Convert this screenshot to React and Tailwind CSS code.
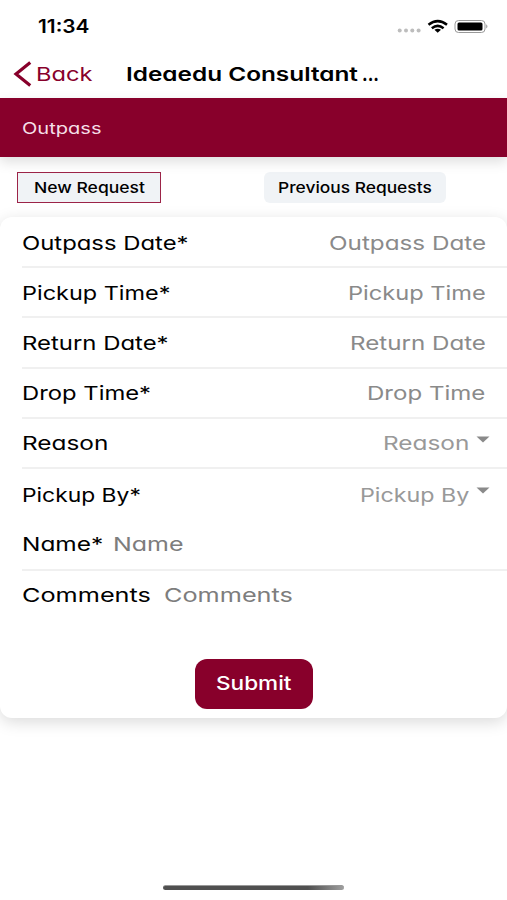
import React, { useLayoutEffect, useRef, useState } from 'react';

// Stretches a single line of text to the given width
const WideText = ({ width, className = '', children }) => {
    const ref = useRef(null);
    const [scale, setScale] = useState(1);

    useLayoutEffect(() => {
        setScale(width / ref.current.offsetWidth);
    }, [width, children]);

    return (
        <span className={`block shrink-0 whitespace-nowrap text-left ${className}`} style={{ width }}>
            <span ref={ref} className="inline-block origin-left" style={{ transform: `scaleX(${scale})` }}>
                {children}
            </span>
        </span>
    );
};

const rows = [
    { label: 'Outpass Date*', labelWidth: 167, value: 'Outpass Date', valueWidth: 157 },
    { label: 'Pickup Time*', labelWidth: 148, value: 'Pickup Time', valueWidth: 138 },
    { label: 'Return Date*', labelWidth: 146, value: 'Return Date', valueWidth: 136 },
    { label: 'Drop Time*', labelWidth: 129, value: 'Drop Time', valueWidth: 119 },
    { label: 'Reason', labelWidth: 86, value: 'Reason', valueWidth: 86, select: true },
    { label: 'Pickup By*', labelWidth: 119, value: 'Pickup By', valueWidth: 109, select: true },
];

const StatusBar = () => (
    <div className="flex h-[50px] shrink-0 items-center pt-[3px] pl-[38px]">
        <WideText width={51} className="pt-px text-[18px] font-semibold">11:34</WideText>
        <svg className="ml-[307px] h-[20px] w-[94px]" viewBox="396 17 94 20">
            <g fill="#bdbdbd">
                <circle cx="399.7" cy="30.5" r="2" />
                <circle cx="406" cy="30.5" r="2" />
                <circle cx="412.3" cy="30.5" r="2" />
                <circle cx="418.6" cy="30.5" r="2" />
            </g>
            <g fill="none" stroke="#000" strokeWidth="2.5">
                <path d="M428.5 24.8Q437.7 17.4 447 24.8" />
                <path d="M431.8 28.2Q437.7 23.5 443.6 28.2" />
            </g>
            <path d="M434.4 29.8Q437.7 27.6 441 29.8L437.7 32.8Z" fill="#000" />
            <rect x="455" y="20.5" width="30" height="12" rx="3.5" fill="none" stroke="#999" />
            <rect x="457.5" y="22.5" width="25" height="8" rx="1.5" fill="#000" />
            <path d="M486.3 24.3Q488.5 26.4 486.3 28.6Z" fill="#888" />
        </svg>
    </div>
);

const FieldRow = ({ label, labelWidth, value, valueWidth, select, last }) => (
    <div className={`ml-[22px] flex h-[50.2px] items-center justify-between pt-[3px] ${last ? '' : 'border-b-2 border-[#f0f0f0]'} ${select ? 'pr-[17px]' : 'pr-[21px]'}`}>
        <WideText width={labelWidth}>{label}</WideText>
        <div className={`flex items-center ${select ? 'text-[#999]' : 'text-[#8a8a8a]'}`}>
            <WideText width={valueWidth}>{value}</WideText>
            {select && (
                <svg className="mb-[10px] ml-[7px] h-[7px] w-[14px]" viewBox="0 0 14 7">
                    <path d="M0.5 0.5H13.5L7 6.5Z" fill="#8a8a8a" />
                </svg>
            )}
        </div>
    </div>
);

const App = () => {
    return (
        <div className="flex h-[900px] w-[507px] flex-col overflow-hidden bg-white font-[Inter,sans-serif] text-[19px] leading-[28px] text-black [font-feature-settings:'cv11']">
            <StatusBar />

            <header className="flex h-[48px] shrink-0 items-center pl-[13px]">
                <svg className="h-[26px] w-[19px]" viewBox="0 0 19 26">
                    <path d="M16 2.5L3 13L16 23.5" fill="none" stroke="#88002b" strokeWidth="3.2" strokeLinecap="square" />
                </svg>
                <WideText width={56} className="ml-[4px] pt-[2px] text-[#88002b]">Back</WideText>
                <h1 className="ml-[34px] flex items-center pt-[2px] font-semibold">
                    <WideText width={232}>Ideaedu Consultant</WideText>
                    <WideText width={17} className="ml-[4px] font-bold">...</WideText>
                </h1>
            </header>

            <div className="relative z-10 flex h-[59px] shrink-0 items-center bg-[#88002b] pl-[22px] text-[16px] text-[#f5dfe7] shadow-[0_5px_12px_rgba(0,0,0,0.13)]">
                <WideText width={79}>Outpass</WideText>
            </div>

            <div className="flex h-[60px] shrink-0 items-center px-[17px] pt-px text-[15px] font-medium">
                <button className="flex h-[31px] w-[144px] items-center border border-[#9c2448] bg-[#f0f3f6] pl-[16px]">
                    <WideText width={111}>New Request</WideText>
                </button>
                <button className="ml-[103px] flex h-[31px] w-[182px] items-center rounded-md bg-[#f0f3f6] pl-[14px]">
                    <WideText width={154}>Previous Requests</WideText>
                </button>
            </div>

            <main className="h-[501px] shrink-0 rounded-[12px] bg-white pt-px shadow-[0_4px_16px_rgba(0,0,0,0.15)]">
                {rows.map((row, i) => (
                    <FieldRow key={row.label} {...row} last={i === rows.length - 1} />
                ))}
                <div className="ml-[22px] flex h-[51.5px] items-center border-b-2 border-[#f0f0f0] pt-[3px]">
                    <WideText width={81}>Name*</WideText>
                    <WideText width={71} className="ml-[10px] text-[#7d7d7d]">Name</WideText>
                </div>
                <div className="ml-[22px] flex h-[49px] items-center pt-[2px]">
                    <WideText width={129}>Comments</WideText>
                    <WideText width={129} className="ml-[13px] text-[#7d7d7d]">Comments</WideText>
                </div>
                <div className="flex justify-center pt-[39px]">
                    <button className="flex h-[50px] w-[118px] items-center justify-center rounded-[12px] bg-[#88002b] font-medium text-white">
                        <WideText width={76}>Submit</WideText>
                    </button>
                </div>
            </main>

            <div className="mt-auto flex h-[15px] shrink-0 justify-center">
                <div className="h-[5px] w-[181px] rounded-full border-t border-[#999] bg-gradient-to-r from-[#505050] from-80% to-[#a0a0a0]" />
            </div>
        </div>
    );
};

export default App;
